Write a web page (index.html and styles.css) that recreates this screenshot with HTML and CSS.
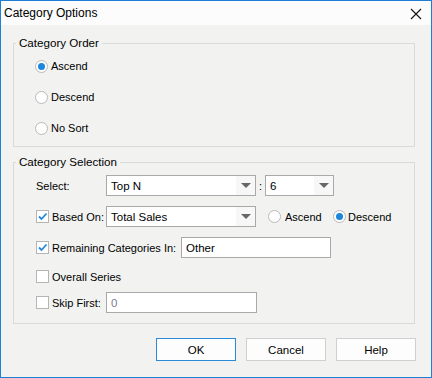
FILE: index.html
```html
<!DOCTYPE html>
<html>
<head>
<meta charset="utf-8">
<link rel="stylesheet" href="styles.css">
</head>
<body>
<div class="window">
  <div class="titlebar">
    <span class="title">Category Options</span>
    <span class="close">
      <svg width="12" height="12" viewBox="0 0 12 12"><path d="M1 1 L11 11 M11 1 L1 11" stroke="#111" stroke-width="1.1" fill="none"/></svg>
    </span>
  </div>
  <div class="body">
    <fieldset class="group group-order">
      <legend>Category Order</legend>
      <div class="radio-row"><span class="radio on"></span><span class="lbl">Ascend</span></div>
      <div class="radio-row"><span class="radio"></span><span class="lbl">Descend</span></div>
      <div class="radio-row"><span class="radio"></span><span class="lbl">No Sort</span></div>
    </fieldset>
    <fieldset class="group group-sel">
      <legend>Category Selection</legend>
      <div class="row row-select">
        <span class="lead">Select:</span>
        <div class="combo w150"><span class="val">Top N</span><span class="drop"><span class="tri"></span></span></div>
        <span class="colon">:</span>
        <div class="combo w69"><span class="val">6</span><span class="drop"><span class="tri"></span></span></div>
      </div>
      <div class="row row-based">
        <span class="lead"><span class="check on"><svg width="11" height="11" viewBox="0 0 11 11"><path d="M2 5.5 L4.5 8 L9.5 2.5" stroke="#1f88e0" stroke-width="1.8" fill="none"/></svg></span><span class="lbl">Based On:</span></span>
        <div class="combo w150"><span class="val">Total Sales</span><span class="drop"><span class="tri"></span></span></div>
        <span class="opt opt-asc"><span class="radio"></span><span class="lbl">Ascend</span></span>
        <span class="opt opt-desc"><span class="radio on"></span><span class="lbl">Descend</span></span>
      </div>
      <div class="row row-remain">
        <span class="lead lead-wide"><span class="check on"><svg width="11" height="11" viewBox="0 0 11 11"><path d="M2 5.5 L4.5 8 L9.5 2.5" stroke="#1f88e0" stroke-width="1.8" fill="none"/></svg></span><span class="lbl">Remaining Categories In:</span></span>
        <div class="textbox w150"><span class="val">Other</span></div>
      </div>
      <div class="row row-overall">
        <span class="lead"><span class="check"></span><span class="lbl">Overall Series</span></span>
      </div>
      <div class="row row-skip">
        <span class="lead"><span class="check"></span><span class="lbl">Skip First:</span></span>
        <div class="textbox w151 disabled"><span class="val">0</span></div>
      </div>
    </fieldset>
    <div class="buttons">
      <button class="btn default">OK</button>
      <button class="btn">Cancel</button>
      <button class="btn">Help</button>
    </div>
  </div>
</div>
</body>
</html>
```
FILE: styles.css
```css
* { box-sizing: border-box; }
html, body { margin: 0; padding: 0; }
body {
  width: 432px;
  height: 378px;
  font-family: "Liberation Sans", Arial, sans-serif;
  font-size: 11px;
  color: #000;
  background: #f2f3f1;
}
.window {
  width: 432px;
  height: 378px;
  border: 1px solid #1d7fd5;
  background: #f2f3f1;
  display: flex;
  flex-direction: column;
}
.titlebar {
  height: 24px;
  background: #fbfcfb;
  display: flex;
  align-items: center;
  justify-content: space-between;
  padding: 0 9px 0 3px;
  flex: none;
}
.title { font-size: 12px; line-height: 14px; }
.close { display: flex; width: 12px; height: 12px; margin-top: 2px; }
.body {
  flex: 1;
  padding: 11px 16px 0 12px;
  display: flex;
  flex-direction: column;
}
.group {
  margin: 0;
  border: 1px solid #dadada;
  padding: 0 0 0 21px;
  min-width: 0;
}
.group legend {
  padding: 0 3px;
  margin-left: -19px;
  line-height: 14px;
  font-size: 11.6px;
}
.group-order { padding-top: 6px; padding-bottom: 8px; }
.radio-row {
  display: flex;
  align-items: center;
  height: 20px;
  margin-bottom: 11px;
}
.radio-row:last-child { margin-bottom: 0; }
.radio {
  width: 13px;
  height: 13px;
  border: 1px solid #b9b9b9;
  border-radius: 50%;
  background: #fff;
  display: flex;
  align-items: center;
  justify-content: center;
  flex: none;
}
.radio.on::after {
  content: "";
  width: 7px;
  height: 7px;
  border-radius: 50%;
  background: #1a86dc;
}
.lbl { margin-left: 3px; white-space: nowrap; }

.group-sel { margin-top: 8px; padding-left: 22px; padding-bottom: 10px; }
.group-sel legend { margin-left: -20px; }
.row { display: flex; align-items: center; height: 21px; }
.row-select { margin-top: 6px; }
.row-based { margin-top: 10px; }
.row-remain { margin-top: 10px; }
.row-overall { margin-top: 8px; }
.row-skip { margin-top: 5px; }
.lead {
  width: 70px;
  display: flex;
  align-items: center;
  flex: none;
  white-space: nowrap;
}
.lead-wide { width: 145px; }
.check {
  width: 13px;
  height: 13px;
  border: 1px solid #b5b5b5;
  background: #fff;
  display: flex;
  align-items: center;
  justify-content: center;
  flex: none;
}
.combo, .textbox {
  height: 21px;
  border: 1px solid #a9a9a9;
  background: #fff;
  display: flex;
  align-items: center;
  flex: none;
}
.w150 { width: 150px; }
.w151 { width: 151px; }
.w69 { width: 69px; }
.val { flex: 1; padding-left: 4px; font-size: 11.5px; white-space: nowrap; }
.disabled .val { color: #7d7a98; }
.drop {
  width: 19px;
  height: 19px;
  background: #f7f7f7;
  display: flex;
  align-items: center;
  justify-content: center;
}
.tri {
  width: 0;
  height: 0;
  border-left: 5px solid transparent;
  border-right: 5px solid transparent;
  border-top: 5px solid #666;
}
.colon { width: 9px; text-align: center; flex: none; }
.opt { display: flex; align-items: center; }
.opt-asc { margin-left: 12px; width: 65px; }
.opt-asc .lbl { margin-left: 4px; }
.opt-desc .lbl { margin-left: 2px; }

.buttons {
  margin-top: 14px;
  display: flex;
  justify-content: flex-end;
  gap: 10px;
  margin-right: -1px;
}
.btn {
  width: 80px;
  height: 23px;
  border: 1px solid #d0d0d0;
  background: #fdfdfd;
  font-family: "Liberation Sans", Arial, sans-serif;
  font-size: 11.5px;
  color: #000;
  padding: 0;
  margin: 0;
}
.btn.default { border-color: #2a8ad8; }
```
